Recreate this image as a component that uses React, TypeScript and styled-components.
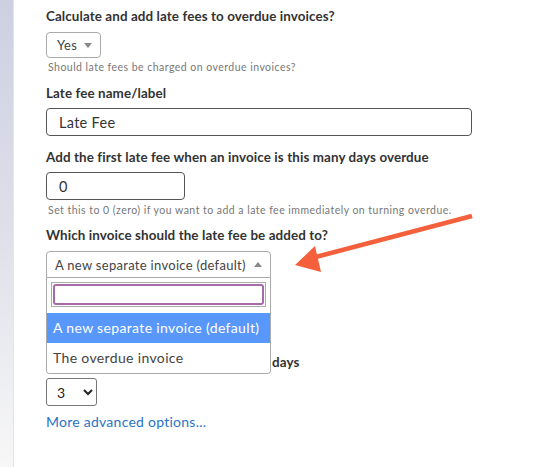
import styled, { createGlobalStyle } from 'styled-components';

const GlobalStyle = createGlobalStyle`
  html, body {
    margin: 0;
    padding: 0;
    background: #fff;
  }
  body {
    font-family: Lato, "Noto Sans", sans-serif;
    color: #333;
  }
`;

function App() {
  return (
    <>
      <GlobalStyle />
      <Page>
        <Sidebar />
        <Content>
          <Label>Calculate and add late fees to overdue invoices?</Label>
          <FakeSelect width={55} top={7}>
            <span>Yes</span>
            <Caret />
          </FakeSelect>
          <Help>Should late fees be charged on overdue invoices?</Help>

          <Label top={11}>Late fee name/label</Label>
          <TextInput width={426} defaultValue="Late Fee" />

          <Label top={12}>Add the first late fee when an invoice is this many days overdue</Label>
          <TextInput width={139} defaultValue="0" />
          <Help top={4}>Set this to 0 (zero) if you want to add a late fee immediately on turning overdue.</Help>

          <Label top={10}>Which invoice should the late fee be added to?</Label>
          <Combo>
            <FakeSelect width={225} top={7} open>
              <span>A new separate invoice (default)</span>
              <Caret up />
            </FakeSelect>
            <Dropdown>
              <SearchWrap>
                <SearchField>
                  <SearchInput autoFocus />
                </SearchField>
              </SearchWrap>
              <Option active>A new separate invoice (default)</Option>
              <Option>The overdue invoice</Option>
            </Dropdown>
          </Combo>

          <Label top={75}>Add a further late fee after this many days</Label>
          <NativeSelect defaultValue="3">
            <option value="1">1</option>
            <option value="2">2</option>
            <option value="3">3</option>
            <option value="7">7</option>
          </NativeSelect>
          <MoreLink href="#">More advanced options...</MoreLink>
        </Content>
        <Pointer width="533" height="467" viewBox="0 0 533 467">
          <line x1="472" y1="216" x2="312" y2="258" stroke="#f4603c" strokeWidth="4.5" />
          <polygon points="295,265 315,246 321,272" fill="#f4603c" />
        </Pointer>
      </Page>
    </>
  );
}

export default App;

const Page = styled.div`
  position: relative;
  display: flex;
  width: 533px;
  height: 467px;
  overflow: hidden;
`;

const Sidebar = styled.div`
  flex: 0 0 13px;
  background: linear-gradient(to bottom, #cdd0e2 0%, #dcdee8 45%, #f7f7f7 100%);
  border-right: 1px solid #e4e4ea;
`;

const Content = styled.div`
  flex: 1;
  display: flex;
  flex-direction: column;
  align-items: flex-start;
  padding: 7px 0 0 32px;
`;

const Label = styled.div<{ top?: number }>`
  margin-top: ${(p) => p.top || 0}px;
  font-size: 13.4px;
  line-height: 18px;
  letter-spacing: 0.1px;
  font-weight: 700;
  color: #333;
  white-space: nowrap;
`;

const Help = styled.div<{ top?: number }>`
  margin-top: ${(p) => p.top ?? 3}px;
  font-size: 10.5px;
  line-height: 12px;
  letter-spacing: 0.47px;
  color: #777;
  padding-left: 2px;
  white-space: nowrap;
`;

const FakeSelect = styled.div<{ width: number; top?: number; open?: boolean }>`
  box-sizing: border-box;
  display: flex;
  align-items: center;
  justify-content: space-between;
  width: ${(p) => p.width}px;
  height: ${(p) => (p.open ? 27 : 26)}px;
  margin-top: ${(p) => p.top || 0}px;
  padding: 0 8px 0 ${(p) => (p.open ? 8 : 10)}px;
  border: 1px solid #aaa;
  border-radius: ${(p) => (p.open ? '4px 4px 0 0' : '4px')};
  background: #fff;
  font-size: 13px;
  letter-spacing: 0.3px;
  color: #444;
  white-space: nowrap;
`;

const Caret = styled.span<{ up?: boolean }>`
  width: 0;
  height: 0;
  border-left: 4px solid transparent;
  border-right: 4px solid transparent;
  ${(p) => (p.up ? 'border-bottom: 5px solid #888;' : 'border-top: 5px solid #888;')}
`;

const TextInput = styled.input<{ width: number }>`
  box-sizing: border-box;
  width: ${(p) => p.width}px;
  height: 28px;
  margin-top: 6px;
  padding: 0 12px;
  border: 1px solid #555;
  border-radius: 4px;
  font-family: inherit;
  font-size: 14.5px;
  letter-spacing: 0.3px;
  color: #333;
  outline: none;
`;

const Combo = styled.div`
  position: relative;
`;

const Dropdown = styled.div`
  position: absolute;
  top: 100%;
  left: 0;
  z-index: 2;
  box-sizing: border-box;
  width: 225px;
  background: #fff;
  border: 1px solid #aaa;
  border-top: none;
  border-radius: 0 0 4px 4px;
  overflow: hidden;
`;

const SearchWrap = styled.div`
  padding: 4px 4px 6px;
`;

const SearchField = styled.div`
  border: 1px solid #aaa;
  padding: 1px;
`;

const SearchInput = styled.input`
  box-sizing: border-box;
  display: block;
  width: 100%;
  height: 21px;
  border: 2px solid #a56ba9;
  border-radius: 3px;
  outline: none;
  font-family: inherit;
  font-size: 13px;
`;

const Option = styled.div<{ active?: boolean }>`
  height: 30px;
  line-height: 30px;
  padding: 0 6px;
  font-size: 14px;
  letter-spacing: 0.35px;
  white-space: nowrap;
  color: ${(p) => (p.active ? '#fff' : '#444')};
  background: ${(p) => (p.active ? '#5897fb' : '#fff')};
`;

const NativeSelect = styled.select`
  width: 51px;
  height: 28px;
  margin-top: 7px;
  padding: 0 6px;
  border: 1px solid #767676;
  border-radius: 3px;
  background: #fff;
  font-family: inherit;
  font-size: 14px;
  color: #222;
`;

const MoreLink = styled.a`
  margin-top: 7px;
  font-size: 14px;
  line-height: 18px;
  letter-spacing: 0.25px;
  color: #2a73c6;
  text-decoration: none;
`;

const Pointer = styled.svg`
  position: absolute;
  inset: 0;
  pointer-events: none;
`;
